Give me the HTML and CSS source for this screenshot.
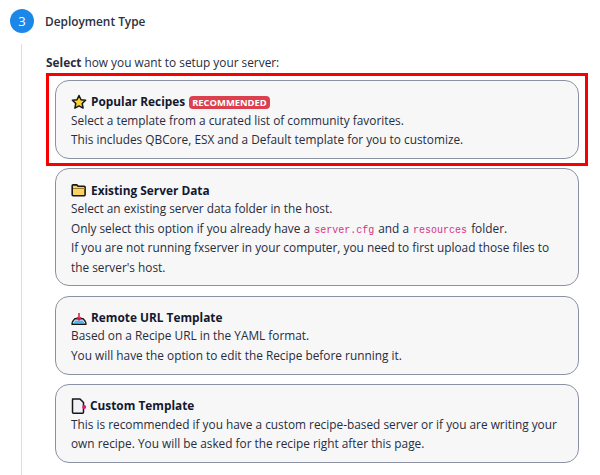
FILE: index.html
```html
<!DOCTYPE html>
<html lang="en">
<head>
<meta charset="utf-8">
<title>Deployment Type</title>
<link rel="stylesheet" href="styles.css">
</head>
<body>
<header class="step-head">
  <span class="step-num">3</span>
  <span class="step-title">Deployment Type</span>
</header>
<main class="step-body">
  <p class="lead"><strong>Select</strong> how you want to setup your server:</p>
  <div class="cards">
    <section class="card">
      <h3 class="card-title">
        <svg class="icon" viewBox="0 0 16 16"><path d="M8 1.500l2 4.200 4.600.6-3.400 3.200.9 4.600L8 11.900l-4.100 2.200.9-4.600L1.400 6.300 6 5.700z" fill="#fcd62e" stroke="#15151c" stroke-width="1.500" stroke-linejoin="round"/></svg>
        Popular Recipes <span class="badge">RECOMMENDED</span>
      </h3>
      <p>Select a template from a curated list of community favorites.</p>
      <p>This includes QBCore, ESX and a Default template for you to customize.</p>
      <div class="highlight"></div>
    </section>
    <section class="card">
      <h3 class="card-title">
        <svg class="icon" viewBox="0 0 16 16"><path d="M1.200 12.800V3.800c0-.6.300-.9.900-.9h3.700l1.300 1.400h6.100c.6 0 .9.300.9.900v7.600c0 .6-.3.900-.9.900H2.100c-.6 0-.9-.3-.9-.9z" fill="#fbd25e" stroke="#17171c" stroke-width="1.600" stroke-linejoin="round"/><path d="M2 6.500h12" stroke="#9a7a22" stroke-width="1"/></svg>
        Existing Server Data
      </h3>
      <p>Select an existing server data folder in the host.</p>
      <p>Only select this option if you already have a <code>server.cfg</code> and a <code>resources</code> folder.</p>
      <p>If you are not running fxserver in your computer, you need to first upload those files to the server's host.</p>
    </section>
    <section class="card">
      <h3 class="card-title">
        <svg class="icon" viewBox="0 0 16 16"><path d="M1 14.200c0-1.200.2-1.900.7-2.700l2-2.700h8.600l2 2.700c.5.800.7 1.500.7 2.700z" fill="#f4f7fb" stroke="#15151c" stroke-width="1.400" stroke-linejoin="round"/><path d="M4.400 10.400h7.200l1.900 2.500h-11z" fill="#4fb6ee"/><path d="M8 3v6.500M5.800 7.300 8 9.800l2.200-2.500" fill="none" stroke="#d8173d" stroke-width="1.500"/></svg>
        Remote URL Template
      </h3>
      <p>Based on a Recipe URL in the YAML format.</p>
      <p>You will have the option to edit the Recipe before running it.</p>
    </section>
    <section class="card">
      <h3 class="card-title title-custom">
        <svg class="icon" viewBox="0 0 16 16"><path d="M1.500 1h7.500l3.500 3.500v9.700c0 .6-.4 1-1 1h-9c-.6 0-1-.4-1-1V2c0-.6.400-1 1-1z" fill="#f2f2f4" stroke="#15151c" stroke-width="1.500" stroke-linejoin="round"/><circle cx="13.200" cy="9" r="2" fill="#e6197f"/></svg>
        Custom Template
      </h3>
      <p>This is recommended if you have a custom recipe-based server or if you are writing your own recipe. You will be asked for the recipe right after this page.</p>
    </section>
  </div>
</main>
</body>
</html>
```
FILE: styles.css
```css
* { box-sizing: border-box; }
html, body { margin: 0; padding: 0; }
body {
  width: 600px;
  height: 475px;
  overflow: hidden;
  background: #fff;
  color: #282d3c;
  font-family: "Open Sans", "Noto Sans", sans-serif;
  font-size: 11.850px;
  line-height: 19.500px;
}
p { margin: 0; }
.step-head {
  display: flex;
  align-items: flex-start;
  gap: 11px;
  padding: 9px 0 0 10px;
  height: 44px;
}
.step-num {
  width: 24px;
  height: 24px;
  border-radius: 50%;
  background: #1b87e9;
  color: #fff;
  font-size: 13px;
  line-height: 24px;
  text-align: center;
}
.step-title {
  font-size: 11.850px;
  line-height: 25px;
  font-weight: 600;
  color: #2a2f3e;
}
.step-body {
  margin-left: 21px;
  border-left: 1px solid #dcdde0;
  padding: 8px 0 0 24px;
  width: 566px;
  height: 431px;
}
.lead { height: 20px; line-height: 20px; }
.lead strong { font-weight: 700; }
.cards {
  display: flex;
  flex-direction: column;
  gap: 9.300px;
  margin: 8px 0 0 9px;
  width: 524px;
}
.card {
  position: relative;
  background: #f7f7f8;
  border: 1px solid #8c92a3;
  border-radius: 14px;
  padding: 10.250px 15px 8.250px;
}
.card-title {
  margin: 0;
  display: flex;
  align-items: center;
  gap: 4px;
  font-size: 11.850px;
  line-height: 19.500px;
  font-weight: 700;
  color: #14182f;
  position: relative;
  top: 1px;
}
.title-custom { gap: 3px; }
.icon { width: 16px; height: 16px; flex: none; }
.badge {
  display: inline-block;
  padding: 0 3px;
  background: #dc3f4d;
  color: #fff;
  border-radius: 4px;
  font-size: 9.400px;
  line-height: 13px;
  font-weight: 700;
}
code {
  font-family: "Liberation Mono", monospace;
  font-size: 10px;
  line-height: 1;
  padding: 0 1px;
  color: #d63384;
}
.highlight {
  position: absolute;
  left: -10px;
  top: -8px;
  width: 542px;
  height: 93px;
  border: 3px solid #f60000;
  pointer-events: none;
}
```
